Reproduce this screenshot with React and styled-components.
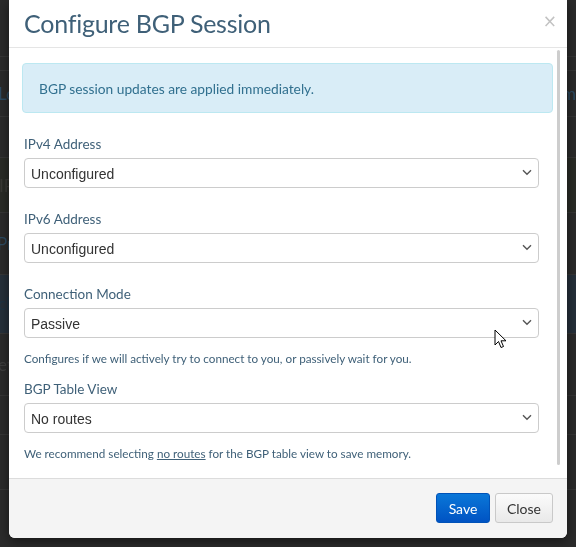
import React from "react";
import styled, { createGlobalStyle } from "styled-components";

const Global = createGlobalStyle`
  html, body { margin: 0; padding: 0; height: 100%; }
  body {
    background: #2b2b2b;
    overflow: hidden;
    font-family: Lato, "Open Sans", sans-serif;
  }
  * { box-sizing: border-box; }
`;

const Backdrop = styled.div`
  position: fixed;
  inset: 0;
  display: flex;
  flex-direction: column;
  padding-top: 56px;
  z-index: 0;
`;

const BgRow = styled.div`
  height: ${(p) => p.$h}px;
  border-top: 1px solid #363636;
  background: ${(p) => p.$bg || "transparent"};
  display: flex;
  align-items: center;
  justify-content: space-between;
  font-size: 17px;
  color: ${(p) => p.$color || "#2e4d63"};
  font-family: Lato, sans-serif;
`;

const BgText = styled.span`
  margin-left: ${(p) => p.$ml || 0}px;
`;

const Modal = styled.div`
  position: relative;
  z-index: 1;
  margin-left: 9px;
  width: 558px;
  background: #fff;
  border-radius: 0 0 6px 6px;
  box-shadow: 0 3px 12px rgba(0, 0, 0, 0.5);
  display: flex;
  flex-direction: column;
`;

const Header = styled.div`
  height: 48px;
  border-bottom: 1px solid #e5e5e5;
  display: flex;
  align-items: center;
  justify-content: space-between;
  padding: 0 10px 2px 15px;
`;

const Title = styled.h4`
  margin: 0;
  font-family: Lato, sans-serif;
  font-weight: 400;
  font-size: 25px;
  color: #3f6078;
  letter-spacing: -0.25px;
`;

const CloseX = styled.span`
  font-size: 17px;
  color: #c2c2c2;
  font-family: "DejaVu Sans", sans-serif;
  margin-top: -4px;
`;

const Body = styled.div`
  position: relative;
  padding: 15px 14px 0 15px;
  height: 430px;
`;

const Scrollbar = styled.div`
  position: absolute;
  right: 7px;
  top: 2px;
  bottom: 13px;
  width: 3px;
  border-radius: 2px;
  background: #cdcdcd;
`;

const Alert = styled.div`
  margin: 0 0 22px -2px;
  width: 531px;
  height: 50px;
  background: #d9edf7;
  border: 1px solid #bce8f1;
  border-radius: 4px;
  color: #31708f;
  font-size: 13.75px;
  display: flex;
  align-items: center;
  padding: 0 16px;
`;

const Group = styled.div`
  display: flex;
  flex-direction: column;
  margin-bottom: ${(p) => p.$mb}px;
  width: 515px;
`;

const Label = styled.label`
  font-size: 13.5px;
  line-height: 18px;
  color: #3f6078;
  margin-bottom: 5px;
`;

const SelectWrap = styled.div`
  position: relative;
  height: 30px;
`;

const Select = styled.select`
  appearance: none;
  -webkit-appearance: none;
  width: 100%;
  height: 30px;
  border: 1px solid #cccccc;
  border-radius: 4px;
  background: #fff;
  font-family: "Liberation Sans", Arial, sans-serif;
  font-size: 14px;
  color: #333;
  padding: 1px 6px 0;
  outline: none;
`;

const Chevron = styled.svg`
  position: absolute;
  right: 7px;
  top: 11px;
  pointer-events: none;
`;

const Help = styled.p`
  margin: 13px 0 0 0;
  font-size: 11.7px;
  line-height: 14px;
  color: #3f6078;
  white-space: nowrap;
`;

const U = styled.span`
  text-decoration: underline;
`;

const Footer = styled.div`
  border-top: 1px solid #dcdcdc;
  background: #f4f4f4;
  height: 60px;
  border-radius: 0 0 6px 6px;
  display: flex;
  justify-content: flex-end;
  align-items: flex-start;
  gap: 5px;
  padding: 14px 14px 0 0;
`;

const Button = styled.button`
  height: 30px;
  padding: 0;
  width: ${(p) => (p.$primary ? 54 : 58)}px;
  border-radius: 3px;
  font-family: Lato, sans-serif;
  font-size: 14px;
  border: 1px solid ${(p) => (p.$primary ? "#0052b8" : "#c9c9c9")};
  color: ${(p) => (p.$primary ? "#fff" : "#333")};
  background: ${(p) =>
    p.$primary
      ? "linear-gradient(#0a77d8, #0053c3)"
      : "linear-gradient(#fbfbfb, #e9e9e9)"};
`;

const Cursor = styled.svg`
  position: fixed;
  left: 494px;
  top: 329px;
  z-index: 5;
`;

function Field({ label, value, help, mb }) {
  return (
    <Group $mb={mb}>
      <Label>{label}</Label>
      <SelectWrap>
        <Select defaultValue={value}>
          <option>{value}</option>
        </Select>
        <Chevron width="10" height="7" viewBox="0 0 10 7">
          <path d="M1 1.2 L5 5.2 L9 1.2" fill="none" stroke="#555" strokeWidth="1.4" />
        </Chevron>
      </SelectWrap>
      {help && <Help>{help}</Help>}
    </Group>
  );
}

export default function App() {
  return (
    <>
      <Global />
      <Backdrop>
        <BgRow $h={14} />
        <BgRow $h={48} $color="#2c4b62"><BgText $ml={-2}>Lo</BgText><BgText>m</BgText></BgRow>
        <BgRow $h={42} />
        <BgRow $h={56} $bg="#2a2c27" $color="#3a3a36"><BgText $ml={-1}>IP</BgText></BgRow>
        <BgRow $h={64} $color="#2c4b62"><BgText $ml={-3}>Pr</BgText></BgRow>
        <BgRow $h={60} $bg="#26303a" $color="#1e3444"><BgText $ml={-2}>ck</BgText></BgRow>
        <BgRow $h={64} $color="#3e3e3e"><BgText $ml={-2}>et</BgText></BgRow>
        <BgRow $h={40} />
        <BgRow $h={56} />
        <BgRow $h={60} />
      </Backdrop>
      <Modal>
        <Header>
          <Title>Configure BGP Session</Title>
          <CloseX>×</CloseX>
        </Header>
        <Body>
          <Alert>BGP session updates are applied immediately.</Alert>
          <Field label="IPv4 Address" value="Unconfigured" mb={22} />
          <Field label="IPv6 Address" value="Unconfigured" mb={22} />
          <Field
            label="Connection Mode"
            value="Passive"
            help="Configures if we will actively try to connect to you, or passively wait for you."
            mb={15}
          />
          <Field
            label="BGP Table View"
            value="No routes"
            help={
              <>
                We recommend selecting <U>no routes</U> for the BGP table view to save memory.
              </>
            }
            mb={0}
          />
          <Scrollbar />
        </Body>
        <Footer>
          <Button $primary>Save</Button>
          <Button>Close</Button>
        </Footer>
      </Modal>
      <Cursor width="14" height="21" viewBox="0 0 14 21">
        <path d="M1 1 L1 16 L4.5 12.5 L7 18.5 L9.5 17.5 L7 11.8 L12 11.8 Z" fill="#fff" stroke="#000" strokeWidth="1" strokeLinejoin="round" />
      </Cursor>
    </>
  );
}
